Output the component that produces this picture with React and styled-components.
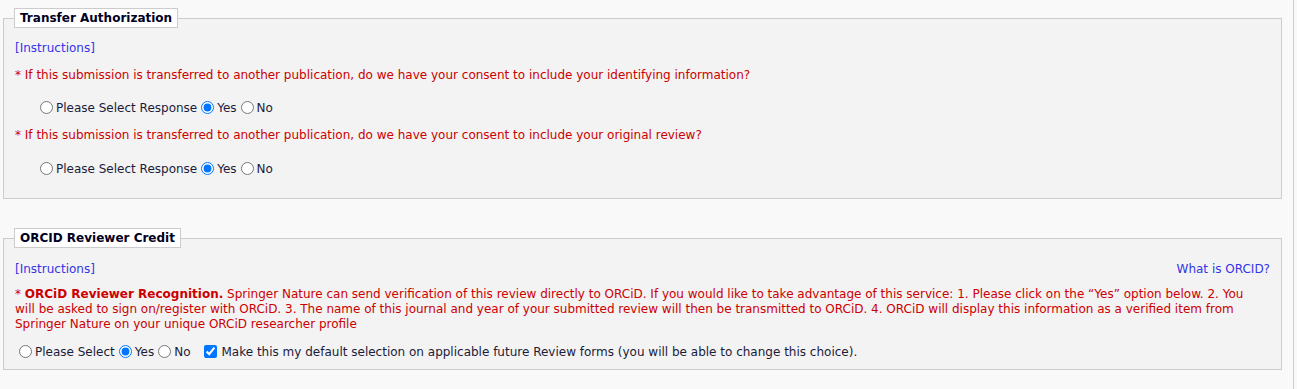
import React from 'react';
import styled, { createGlobalStyle } from 'styled-components';

const GlobalStyle = createGlobalStyle`
  html, body {
    margin: 0;
    padding: 0;
    background: #f9f9f9;
  }
  body {
    font-family: "DejaVu Sans", Verdana, sans-serif;
    font-size: 12px;
    color: #1b1b3a;
  }
`;

const Page = styled.div`
  width: 1294px;
  height: 389px;
  box-sizing: border-box;
  border-right: 1px solid #cfcfcf;
  padding: 8px 0 0 3px;
`;

const Section = styled.fieldset`
  width: 1279px;
  box-sizing: border-box;
  margin: 0 0 ${p => p.$gap || 0}px 0;
  padding: 0 11px ${p => p.$bottom || 0}px 11px;
  border: 1px solid #cccccc;
  background: #f3f3f3;
  min-width: 0;
`;

const Legend = styled.legend`
  margin-left: -1px;
  padding: 0 5px;
  height: 20px;
  line-height: 19px;
  box-sizing: border-box;
  border: 1px solid #cccccc;
  background: #ffffff;
  font-weight: bold;
  font-size: 12px;
  color: #000022;
`;

const TopRow = styled.div`
  display: flex;
  justify-content: space-between;
  align-items: center;
  height: 15px;
  line-height: 15px;
  margin-top: ${p => p.$top}px;
`;

const Link = styled.a`
  color: #3333e8;
  text-decoration: none;
  cursor: pointer;
`;

const Question = styled.div`
  color: #cc0000;
  line-height: 15px;
  margin-top: ${p => p.$top}px;
  padding-right: ${p => p.$right || 0}px;
`;

const Strong = styled.b`
  font-weight: bold;
`;

const Options = styled.div`
  display: flex;
  align-items: center;
  height: 17px;
  margin-top: ${p => p.$top}px;
  padding-left: ${p => p.$indent}px;
`;

const Option = styled.label`
  display: inline-flex;
  align-items: center;
  margin-right: ${p => p.$space || 4}px;
  white-space: nowrap;
`;

const Radio = styled.input.attrs({ type: 'radio' })`
  width: 13px;
  height: 13px;
  margin: 0 3px 0 0;
  accent-color: #0075ff;
`;

const Check = styled.input.attrs({ type: 'checkbox' })`
  width: 13px;
  height: 13px;
  margin: 0 4px 0 0;
  accent-color: #0075ff;
`;

const ConsentChoice = ({ name, indent, top }) => (
  <Options $indent={indent} $top={top}>
    <Option><Radio name={name} />Please Select Response</Option>
    <Option><Radio name={name} defaultChecked />Yes</Option>
    <Option><Radio name={name} />No</Option>
  </Options>
);

export default function App() {
  return (
    <>
      <GlobalStyle />
      <Page>
        <Section $gap={29} $bottom={21}>
          <Legend>Transfer Authorization</Legend>
          <TopRow $top={13}>
            <Link>[Instructions]</Link>
          </TopRow>
          <Question $top={12}>
            * If this submission is transferred to another publication, do we have your consent to include your identifying information?
          </Question>
          <ConsentChoice name="identity" indent={25} top={16} />
          <Question $top={12}>
            * If this submission is transferred to another publication, do we have your consent to include your original review?
          </Question>
          <ConsentChoice name="review" indent={25} top={17} />
        </Section>

        <Section $bottom={9}>
          <Legend>ORCID Reviewer Credit</Legend>
          <TopRow $top={14}>
            <Link>[Instructions]</Link>
            <Link>What is ORCID?</Link>
          </TopRow>
          <Question $top={10} $right={8}>
            * <Strong>ORCiD Reviewer Recognition.</Strong> Springer Nature can send verification of this review directly to ORCiD. If you would like to take advantage of this service: 1. Please click on the “Yes” option below. 2. You will be asked to sign on/register with ORCiD. 3. The name of this journal and year of your submitted review will then be transmitted to ORCiD. 4. ORCiD will display this information as a verified item from Springer Nature on your unique ORCiD researcher profile
          </Question>
          <Options $indent={4} $top={11}>
            <Option><Radio name="orcid" />Please Select</Option>
            <Option><Radio name="orcid" defaultChecked />Yes</Option>
            <Option $space={14}><Radio name="orcid" />No</Option>
            <Option><Check defaultChecked />Make this my default selection on applicable future Review forms (you will be able to change this choice).</Option>
          </Options>
        </Section>
      </Page>
    </>
  );
}
